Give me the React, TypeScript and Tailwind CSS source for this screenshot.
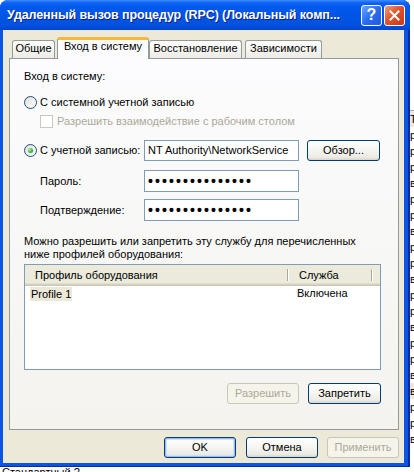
import React from "react";

// classic XP-looking service properties dialog

const btnBase =
  "h-[21px] rounded-[3px] border flex items-center justify-center text-[11px] leading-[13px]";
const btnEnabled =
  "border-[#003c74] text-black bg-[linear-gradient(to_bottom,#ffffff_0%,#f6f6f2_45%,#ecebe6_85%,#d8d3c8_100%)]";
const btnDisabled = "border-[#c9c7ba] text-[#aca899] bg-[#f5f4ea]";

function XPButton({
  label,
  disabled,
  isDefault,
  className = "",
}: {
  label: string;
  disabled?: boolean;
  isDefault?: boolean;
  className?: string;
}) {
  return (
    <div
      className={`${btnBase} ${disabled ? btnDisabled : btnEnabled} ${
        isDefault
          ? "shadow-[inset_0_0_0_1px_#9cbcf0,inset_0_0_0_2px_#cfe0fb]"
          : ""
      } ${className}`}
    >
      {label}
    </div>
  );
}

function Radio({ checked }: { checked?: boolean }) {
  return (
    <span className="w-[13px] h-[13px] shrink-0 rounded-full border border-[#1c5180] bg-[linear-gradient(135deg,#dcdcd7_0%,#f4f4f0_60%,#ffffff_100%)] flex items-center justify-center">
      {checked && (
        <span className="w-[5px] h-[5px] rounded-full bg-[radial-gradient(circle_at_35%_35%,#b4f0a8_0%,#3cb43c_55%,#1f8f1f_100%)]" />
      )}
    </span>
  );
}

function TextBox({
  children,
  h = "h-[21px]",
}: {
  children: React.ReactNode;
  h?: string;
}) {
  return (
    <div
      className={`w-[155px] ${h} border border-[#7f9db9] bg-white flex items-center pl-[3px] whitespace-nowrap overflow-hidden`}
    >
      {children}
    </div>
  );
}

function Dots() {
  return (
    <span className="text-[14px] leading-[14px] tracking-[2.1px] font-bold">
      •••••••••••••••
    </span>
  );
}

function Tab({ label, className = "" }: { label: string; className?: string }) {
  return (
    <div
      className={`h-[18px] border border-b-0 border-[#919b9c] rounded-t-[3px] bg-[linear-gradient(to_bottom,#ffffff,#ecebe6)] flex items-start justify-center pt-[1px] leading-[13px] ${className}`}
    >
      {label}
    </div>
  );
}

const rightRows = [
  "р", "р", "р", "в", "р", "р", "в", "р", "р", "в",
  "р", "р", "в", "р", "р", "в", "в", "р", "р", "в",
];

export default function App() {
  return (
    <div className="w-[414px] h-[472px] overflow-hidden bg-white font-['Liberation_Sans',Arial,sans-serif] text-[11px] text-black">
      <div className="flex">
        {/* Window */}
        <div className="w-[410px] h-[467px] shrink-0 flex flex-col rounded-t-[8px] bg-[#0a55e3] shadow-[inset_-2px_0_0_#0b2a9e,inset_0_-1px_0_#0b2a9e]">
          {/* Title bar */}
          <div className="h-[30px] rounded-t-[8px] flex items-center pl-[7px] pr-[5px] bg-[linear-gradient(to_bottom,#3d8dff_0%,#0d61f2_10%,#0058ee_25%,#0055e5_55%,#0052de_85%,#0044cc_100%)]">
            <span className="flex-1 min-w-0 overflow-hidden text-white font-bold text-[12.5px] tracking-[-0.1px] whitespace-nowrap [text-shadow:1px_1px_#0a1f8a]">
              Удаленный вызов процедур (RPC) (Локальный комп...
            </span>
            <div className="ml-[4px] w-[21px] h-[21px] shrink-0 rounded-[3px] border border-white bg-[linear-gradient(135deg,#6aa6ff_0%,#2a6cf0_50%,#1f5ae0_100%)] flex items-center justify-center text-white font-bold text-[16px] leading-none">
              ?
            </div>
            <div className="ml-[2px] w-[21px] h-[21px] shrink-0 rounded-[3px] border border-white bg-[linear-gradient(135deg,#f29b7e_0%,#e2532c_45%,#c7381b_100%)] flex items-center justify-center">
              <svg width="11" height="11" viewBox="0 0 11 11">
                <path
                  d="M1.5 1.5 L9.5 9.5 M9.5 1.5 L1.5 9.5"
                  stroke="white"
                  strokeWidth="2"
                  strokeLinecap="square"
                />
              </svg>
            </div>
          </div>

          {/* Dialog body */}
          <div className="ml-[3px] w-[401px] h-[433px] bg-[#ece9d8] pl-[6px] pt-[7px] flex flex-col">
            {/* Tabs */}
            <div className="flex items-end h-[21px] pl-[3px] relative z-10">
              <Tab label="Общие" className="w-[43px]" />
              <div className="ml-[2px] w-[92px] h-[22px] -mb-px bg-[#fcfcfe] border-x border-[#919b9c] border-t-[3px] border-t-[#f5b83a] rounded-t-[3px] flex items-start justify-center leading-[13px]">
                Вход в систему
              </div>
              <Tab label="Восстановление" className="w-[93px]" />
              <Tab label="Зависимости" className="ml-[3px] w-[77px]" />
            </div>

            {/* Tab panel */}
            <div className="w-[390px] h-[372px] border border-[#919b9c] bg-[linear-gradient(to_bottom,#fcfcfe,#f4f3ee)] pl-[14px] pt-[11px] flex flex-col leading-[13px]">
              <div className="h-[13px]">Вход в систему:</div>

              <div className="mt-[13px] h-[13px] flex items-center">
                <Radio />
                <span className="ml-[3px]">С системной учетной записью</span>
              </div>

              <div className="mt-[6px] h-[13px] flex items-center pl-[16px]">
                <span className="w-[13px] h-[13px] shrink-0 border border-[#cac8bb] bg-white" />
                <span className="ml-[4px] text-[#aca899]">
                  Разрешить взаимодействие с рабочим столом
                </span>
              </div>

              <div className="mt-[12px] h-[21px] flex items-center">
                <Radio checked />
                <span className="ml-[3px] w-[104px]">С учетной записью:</span>
                <TextBox>NT Authority\NetworkService</TextBox>
                <XPButton label="Обзор..." className="ml-[8px] w-[73px]" />
              </div>

              <div className="mt-[9px] h-[22px] flex items-center pl-[16px]">
                <span className="w-[104px]">Пароль:</span>
                <TextBox h="h-[22px]">
                  <Dots />
                </TextBox>
              </div>

              <div className="mt-[7px] h-[22px] flex items-center pl-[16px]">
                <span className="w-[104px]">Подтверждение:</span>
                <TextBox h="h-[22px]">
                  <Dots />
                </TextBox>
              </div>

              <div className="mt-[14px]">
                Можно разрешить или запретить эту службу для перечисленных
                <br />
                ниже профилей оборудования:
              </div>

              {/* List view */}
              <div className="mt-[3px] w-[357px] h-[106px] border border-[#7f9db9] bg-white flex flex-col">
                <div className="h-[21px] flex bg-[#ebeadb] shadow-[inset_0_-1px_0_#cbc7b8,inset_0_-2px_0_#d6d2c2,inset_0_-3px_0_#e2decd]">
                  <div className="w-[264px] pl-[10px] flex items-center relative">
                    Профиль оборудования
                    <span className="absolute right-0 top-[4px] bottom-[5px] w-[2px] border-l border-[#aca899] bg-white" />
                  </div>
                  <div className="w-[84px] pl-[10px] flex items-center relative">
                    Служба
                    <span className="absolute right-0 top-[4px] bottom-[5px] w-[2px] border-l border-[#aca899] bg-white" />
                  </div>
                </div>
                <div className="h-[15px] flex items-center">
                  <div className="w-[264px] pl-[5px]">
                    <span className="bg-[#ece9d8] px-[1px] inline-block h-[14px] leading-[14px]">
                      Profile 1
                    </span>
                  </div>
                  <div className="pl-[8px]">Включена</div>
                </div>
              </div>

              <div className="mt-[13px] flex">
                <XPButton label="Разрешить" disabled className="ml-[203px] w-[72px]" />
                <XPButton label="Запретить" className="ml-[9px] w-[73px]" />
              </div>
            </div>

            {/* Dialog buttons */}
            <div className="mt-[7px] flex">
              <XPButton label="OK" isDefault className="ml-[155px] w-[72px]" />
              <XPButton label="Отмена" className="ml-[10px] w-[72px]" />
              <XPButton label="Применить" disabled className="ml-[9px] w-[72px]" />
            </div>
          </div>
        </div>

        {/* Window behind, right edge */}
        <div className="w-[4px] h-[467px] shrink-0 bg-white pt-[110px] whitespace-nowrap">
          <div className="h-[17px] border-t border-[#aca899] bg-[#ece9d8] leading-[16px]">Т</div>
          {rightRows.map((c, i) => (
            <div
              key={i}
              className={`h-[16px] leading-[16px] ${i === 16 ? "bg-[#ece9d8]" : ""}`}
            >
              {c}
            </div>
          ))}
        </div>
      </div>

      {/* Window behind, bottom edge */}
      <div className="h-[5px] pl-[2px] leading-[11px] whitespace-nowrap">
        Стандартный ?
      </div>
    </div>
  );
}
